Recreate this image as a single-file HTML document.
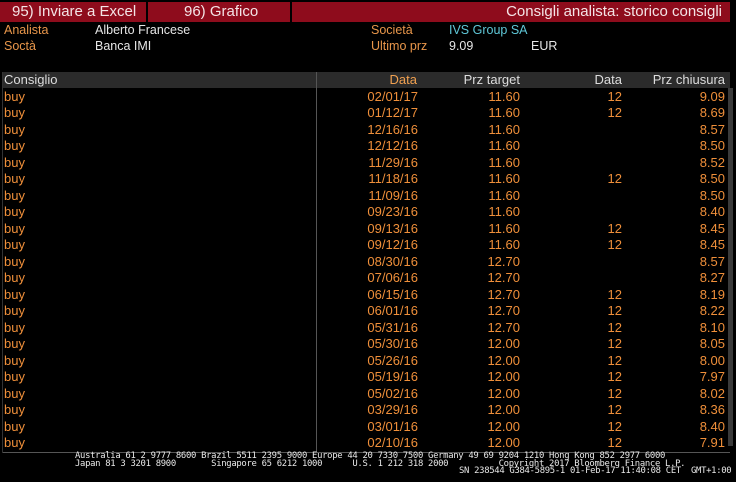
<!DOCTYPE html>
<html><head><meta charset="utf-8"><style>
*{margin:0;padding:0;box-sizing:border-box}
body{width:736px;height:482px;background:#000;overflow:hidden;position:relative;font-family:"Liberation Sans","DejaVu Sans",sans-serif;font-size:12.5px;color:#f0a050}
.a{position:absolute;white-space:nowrap}
.bar{position:absolute;top:2px;height:20px;background:#8e0c1c;color:#f4e4e6;font-size:15px;line-height:20px}
.o{color:#e8964a}
.w{color:#e6e6e6}
.row{position:absolute;left:0;width:736px;height:16px;line-height:16px;color:#ef8f3a;font-size:13px}
.row span{position:absolute}
.ft{position:absolute;font-family:"DejaVu Sans Mono","Liberation Mono",monospace;font-size:8.9px;color:#e8e8e8;line-height:7.5px;white-space:pre;letter-spacing:-0.3px}
</style></head><body>
<div class="bar" style="left:0;width:146px;padding-left:12px">95) Inviare a Excel</div>
<div class="bar" style="left:148px;width:142px;padding-left:36px">96) Grafico</div>
<div class="bar" style="left:292px;width:438px;text-align:right;padding-right:8px">Consigli analista: storico consigli</div>
<div class="a o" style="left:4px;top:22px;line-height:16px">Analista</div>
<div class="a w" style="left:95px;top:22px;line-height:16px">Alberto Francese</div>
<div class="a o" style="left:4px;top:38px;line-height:16px">Soctà</div>
<div class="a w" style="left:95px;top:38px;line-height:16px">Banca IMI</div>
<div class="a o" style="left:371px;top:22px;line-height:16px">Società</div>
<div class="a" style="left:449px;top:22px;line-height:16px;color:#5fc8d8">IVS Group SA</div>
<div class="a o" style="left:371px;top:38px;line-height:16px">Ultimo prz</div>
<div class="a w" style="left:449px;top:38px;line-height:16px">9.09</div>
<div class="a w" style="left:531px;top:38px;line-height:16px">EUR</div>
<div class="a" style="left:2px;top:72px;width:728px;height:16px;background:#2b2b2b"></div>
<div class="a" style="left:316px;top:72px;width:1px;height:381px;background:#555"></div>
<div class="a" style="left:2px;top:452px;width:728px;height:1px;background:#555"></div>
<div class="a" style="left:2px;top:72px;width:1px;height:381px;background:#333"></div>
<div class="a" style="left:728px;top:88px;width:5px;height:358px;background:#3a3a3a"></div>
<div class="row" style="top:72px;color:#ddd"><span style="left:4px">Consiglio</span><span style="right:319px;color:#f0a050">Data</span><span style="right:216px">Prz target</span><span style="right:114px">Data</span><span style="right:11px">Prz chiusura</span></div>
<div id="rows"></div>
<div class="ft" style="left:75px;top:453px">Australia 61 2 9777 8600 Brazil 5511 2395 9000 Europe 44 20 7330 7500 Germany 49 69 9204 1210 Hong Kong 852 2977 6000
Japan 81 3 3201 8900       Singapore 65 6212 1000      U.S. 1 212 318 2000          Copyright 2017 Bloomberg Finance L.P.</div>
<div class="ft" style="left:459px;top:468px">SN 238544 G384-5895-1 01-Feb-17 11:40:08 CET  GMT+1:00</div>
<script>
var d=[["02/01/17","11.60","12","9.09"],["01/12/17","11.60","12","8.69"],["12/16/16","11.60","","8.57"],["12/12/16","11.60","","8.50"],["11/29/16","11.60","","8.52"],["11/18/16","11.60","12","8.50"],["11/09/16","11.60","","8.50"],["09/23/16","11.60","","8.40"],["09/13/16","11.60","12","8.45"],["09/12/16","11.60","12","8.45"],["08/30/16","12.70","","8.57"],["07/06/16","12.70","","8.27"],["06/15/16","12.70","12","8.19"],["06/01/16","12.70","12","8.22"],["05/31/16","12.70","12","8.10"],["05/30/16","12.00","12","8.05"],["05/26/16","12.00","12","8.00"],["05/19/16","12.00","12","7.97"],["05/02/16","12.00","12","8.02"],["03/29/16","12.00","12","8.36"],["03/01/16","12.00","12","8.40"],["02/10/16","12.00","12","7.91"]];
var h="";for(var i=0;i<d.length;i++){var t=89+i*16.48;h+='<div class="row" style="top:'+t+'px"><span style="left:4px">buy</span><span style="right:318px">'+d[i][0]+'</span><span style="right:216px">'+d[i][1]+'</span><span style="right:114px">'+d[i][2]+'</span><span style="right:11px">'+d[i][3]+'</span></div>';}
document.getElementById("rows").innerHTML=h;
</script>
</body></html>
